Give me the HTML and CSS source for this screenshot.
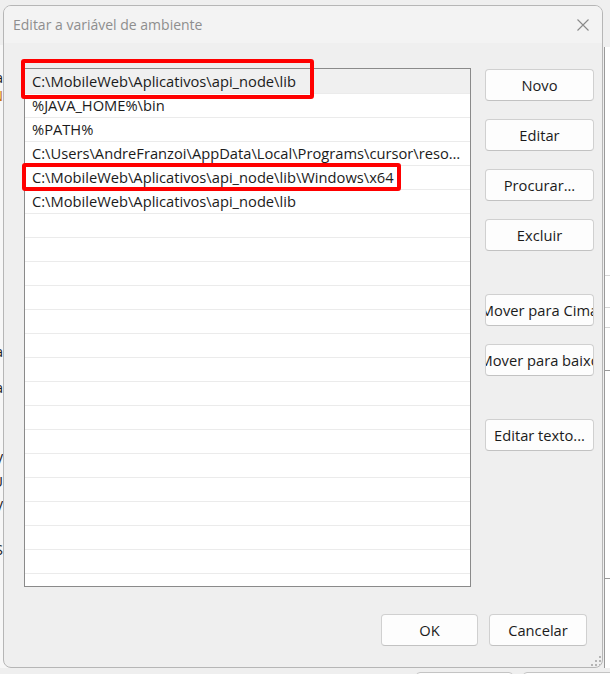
FILE: index.html
```html
<!DOCTYPE html>
<html lang="pt-BR">
<head>
<meta charset="utf-8">
<title>Editar a variável de ambiente</title>
<link rel="stylesheet" href="styles.css">
</head>
<body>
<div class="desktop">
  <div class="bg-left">
    <div class="frag f1">a</div>
    <div class="frag f2">N</div>
    <div class="frag f3">a</div>
    <div class="frag f4">a</div>
    <div class="frag f5">V</div>
    <div class="frag f6">U</div>
    <div class="frag f7">V</div>
    <div class="frag f8">S</div>
  </div>
  <div class="bg-right">
    <div class="hl h1"></div>
    <div class="hl h2"></div>
    <div class="hl h3"></div>
    <div class="hl h4"></div>
    <div class="hl h5"></div>
  </div>
  <div class="bg-bottom">
    <span class="bb bb1"></span>
    <span class="bb bb2"></span>
  </div>

  <div class="dialog">
    <div class="titlebar">
      <span class="title">Editar a variável de ambiente</span>
      <svg class="close" width="12" height="12" viewBox="0 0 12 12" aria-hidden="true">
        <path d="M0.5 0.5 L11.5 11.5 M11.5 0.5 L0.5 11.5" stroke="#8a8a8a" stroke-width="1.1" fill="none"/>
      </svg>
    </div>
    <div class="content">
      <div class="main">
        <div class="list">
          <div class="row sel">C:\MobileWeb\Aplicativos\api_node\lib</div>
          <div class="row">%JAVA_HOME%\bin</div>
          <div class="row">%PATH%</div>
          <div class="row">C:\Users\AndreFranzoi\AppData\Local\Programs\cursor\resources\app\bin</div>
          <div class="row">C:\MobileWeb\Aplicativos\api_node\lib\Windows\x64</div>
          <div class="row">C:\MobileWeb\Aplicativos\api_node\lib</div>
          <div class="row"></div>
          <div class="row"></div>
          <div class="row"></div>
          <div class="row"></div>
          <div class="row"></div>
          <div class="row"></div>
          <div class="row"></div>
          <div class="row"></div>
          <div class="row"></div>
          <div class="row"></div>
          <div class="row"></div>
          <div class="row"></div>
          <div class="row"></div>
          <div class="row"></div>
          <div class="row"></div>
          <div class="row"></div>
        </div>
        <div class="side">
          <div class="btn first"><span>Novo</span></div>
          <div class="btn"><span>Editar</span></div>
          <div class="btn"><span>Procurar...</span></div>
          <div class="btn"><span>Excluir</span></div>
          <div class="btn gap"><span>Mover para Cima</span></div>
          <div class="btn"><span>Mover para baixo</span></div>
          <div class="btn gap"><span>Editar texto...</span></div>
        </div>
      </div>
      <div class="footer">
        <div class="btn ok"><span>OK</span></div>
        <div class="btn cancel"><span>Cancelar</span></div>
      </div>
    </div>
    <svg class="grip" width="12" height="12" viewBox="0 0 12 12" aria-hidden="true">
      <rect x="10" y="2" width="2" height="2" fill="#b4b4b4"/>
      <rect x="6" y="6" width="2" height="2" fill="#b4b4b4"/>
      <rect x="10" y="6" width="2" height="2" fill="#b4b4b4"/>
      <rect x="2" y="10" width="2" height="2" fill="#b4b4b4"/>
      <rect x="6" y="10" width="2" height="2" fill="#b4b4b4"/>
      <rect x="10" y="10" width="2" height="2" fill="#b4b4b4"/>
    </svg>
  </div>

  <div class="mark mark1"></div>
  <div class="mark mark2"></div>
</div>
</body>
</html>
```

FILE: styles.css
```css
html, body {
  margin: 0;
  padding: 0;
}

body {
  width: 610px;
  height: 674px;
  overflow: hidden;
  font-family: "Segoe UI", "Open Sans", "Noto Sans", sans-serif;
  color: #1b1b1b;
}

.desktop {
  position: relative;
  width: 610px;
  height: 674px;
  background: #efefef;
  overflow: hidden;
}

/* windows behind the dialog */
.bg-left {
  position: absolute;
  left: -20px;
  top: 45px;
  width: 30px;
  height: 640px;
  background: #f7f7f7;
  border-bottom: 1px solid #c8c8c8;
}

.frag {
  position: absolute;
  right: 7px;
  font-size: 14px;
  line-height: 14px;
  color: #1b1b1b;
}

.f1 { top: 26px; }
.f2 { top: 44px; color: #c46a00; }
.f3 { top: 300px; }
.f4 { top: 336px; }
.f5 { top: 407px; }
.f6 { top: 430px; }
.f7 { top: 454px; }
.f8 { top: 498px; }

.bg-right {
  position: absolute;
  left: 604px;
  top: 47px;
  width: 30px;
  height: 640px;
  background: #ffffff;
  border-left: 1px solid #9a9a9a;
}

.hl {
  position: absolute;
  left: 0;
  right: 0;
  height: 1px;
  background: #d6d6d6;
}

.h1 { top: 228px; }
.h2 { top: 260px; }
.h3 { top: 280px; }
.h4 { top: 323px; background: #9a9a9a; }
.h5 { top: 531px; background: #9a9a9a; }

.bg-bottom {
  position: absolute;
  left: 0;
  top: 668px;
  width: 610px;
  height: 6px;
  background: #efefef;
}

.bb {
  position: absolute;
  top: 4px;
  height: 10px;
  border: 1px solid #c4c4c4;
  border-radius: 4px;
  background: #fdfdfd;
}

.bb1 { left: 416px; width: 95px; }
.bb2 { left: 523px; width: 100px; }

/* dialog */
.dialog {
  position: absolute;
  left: 3px;
  top: 5px;
  width: 600px;
  height: 663px;
  box-sizing: border-box;
  border: 1px solid #b6b6b6;
  border-radius: 8px;
  background: #efefef;
  overflow: hidden;
  display: flex;
  flex-direction: column;
}

.titlebar {
  height: 37px;
  flex: none;
  background: #f3f3f3;
  display: flex;
  align-items: center;
  padding: 0 13px 0 9px;
}

.title {
  flex: 1;
  font-size: 14px;
  color: #8e8e8e;
  white-space: nowrap;
}

.close {
  display: block;
  flex: none;
}

.content {
  flex: 1;
  display: flex;
  flex-direction: column;
  padding: 25px 8px 21px 20px;
}

.main {
  display: flex;
  gap: 14px;
  height: 519px;
  flex: none;
}

.list {
  width: 447px;
  height: 519px;
  box-sizing: border-box;
  border: 1px solid #8a8a8a;
  background: #ffffff;
  overflow: hidden;
  padding-top: 1px;
  flex: none;
}

.row {
  height: 24px;
  box-sizing: border-box;
  border-bottom: 1px solid #ebebeb;
  padding: 0 6px 0 7px;
  font-size: 14.7px;
  line-height: 23px;
  color: #1b1b1b;
  white-space: nowrap;
  overflow: hidden;
  text-overflow: ellipsis;
}

.row.sel {
  background: #f0f0f0;
  height: 25px;
  margin-top: -1px;
  line-height: 24px;
}

.side {
  width: 109px;
  flex: none;
  display: flex;
  flex-direction: column;
  gap: 18px;
}

.btn {
  height: 32px;
  box-sizing: border-box;
  border: 1px solid #d0d0d0;
  border-bottom-color: #c2c2c2;
  border-radius: 4px;
  background: #fdfdfd;
  display: flex;
  justify-content: center;
  align-items: center;
  overflow: hidden;
  white-space: nowrap;
  font-size: 14.7px;
  color: #1b1b1b;
  flex: none;
}

.btn span {
  flex: none;
}

.btn.first {
  margin-top: 1px;
}

.btn.gap {
  margin-top: 25px;
}

.footer {
  margin-top: 27px;
  display: flex;
  justify-content: flex-end;
  gap: 11px;
  padding-right: 7px;
}

.btn.ok {
  width: 97px;
}

.btn.cancel {
  width: 98px;
}

.grip {
  position: absolute;
  right: 1px;
  bottom: 1px;
  display: block;
}

/* red annotation boxes */
.mark {
  position: absolute;
  box-sizing: border-box;
  border: 4px solid #ff0000;
  border-radius: 3px;
}

.mark1 {
  left: 21px;
  top: 59px;
  width: 293px;
  height: 40px;
}

.mark2 {
  left: 22px;
  top: 163px;
  width: 379px;
  height: 28px;
}
```
